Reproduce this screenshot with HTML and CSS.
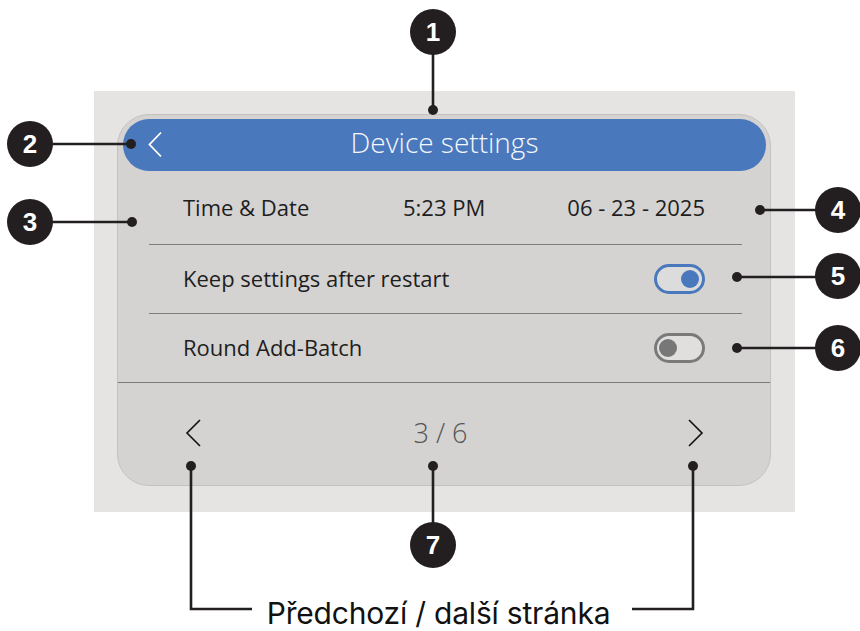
FILE: index.html
```html
<!DOCTYPE html>
<html lang="cs">
<head>
<meta charset="utf-8">
<title>Device settings</title>
<link rel="stylesheet" href="styles.css">
</head>
<body>
<div class="page">
  <div class="panel">
    <div class="card">
      <div class="header">
        <svg class="back" width="16" height="28" viewBox="0 0 16 28"><path d="M14 1.5 L2.5 13.5 L14 25.5" fill="none" stroke="#ffffff" stroke-width="1.8"/></svg>
        <h1 class="title">Device settings</h1>
        <span></span>
      </div>
      <div class="row row-time">
        <span class="label">Time &amp; Date</span>
        <span class="time">5:23 PM</span>
        <span class="date">06 - 23 - 2025</span>
      </div>
      <div class="divider"></div>
      <div class="row">
        <span class="label">Keep settings after restart</span>
        <span class="toggle on"><span class="knob"></span></span>
      </div>
      <div class="divider"></div>
      <div class="row">
        <span class="label">Round Add-Batch</span>
        <span class="toggle off"><span class="knob"></span></span>
      </div>
      <div class="divider full"></div>
      <div class="footer">
        <svg class="chev" width="16" height="28" viewBox="0 0 16 28"><path d="M15 1 L2 14 L15 27" fill="none" stroke="#111" stroke-width="1.6"/></svg>
        <span class="pager">3 / 6</span>
        <svg class="chev" width="16" height="28" viewBox="0 0 16 28"><path d="M1 1 L14 14 L1 27" fill="none" stroke="#111" stroke-width="1.6"/></svg>
      </div>
    </div>
  </div>
  <p class="caption">Předchozí / další stránka</p>

  <svg class="leaders" width="860" height="631" viewBox="0 0 860 631">
    <g stroke="#231f20" stroke-width="2.6" fill="none">
      <line x1="433" y1="50" x2="433" y2="110"/>
      <line x1="50" y1="144" x2="131" y2="144"/>
      <line x1="50" y1="222" x2="132" y2="222"/>
      <line x1="760" y1="210" x2="820" y2="210"/>
      <line x1="737" y1="277" x2="820" y2="277"/>
      <line x1="737" y1="348" x2="820" y2="348"/>
      <line x1="433" y1="466" x2="433" y2="527"/>
      <polyline points="191,466 191,609 252,609"/>
      <polyline points="693,466 693,609 632,609"/>
    </g>
    <g fill="#231f20">
      <circle cx="433" cy="110" r="5"/>
      <circle cx="131" cy="144" r="5"/>
      <circle cx="132" cy="222" r="5"/>
      <circle cx="760" cy="210" r="5"/>
      <circle cx="737" cy="277" r="5"/>
      <circle cx="737" cy="348" r="5"/>
      <circle cx="433" cy="466" r="5"/>
      <circle cx="191" cy="466" r="5"/>
      <circle cx="693" cy="466" r="5"/>
    </g>
  </svg>
  <div class="badge b1">1</div>
  <div class="badge b2">2</div>
  <div class="badge b3">3</div>
  <div class="badge b4">4</div>
  <div class="badge b5">5</div>
  <div class="badge b6">6</div>
  <div class="badge b7">7</div>
</div>
</body>
</html>
```

FILE: styles.css
```css
html, body {
  margin: 0;
  padding: 0;
  background: #ffffff;
}

.page {
  position: relative;
  width: 860px;
  height: 631px;
  overflow: hidden;
  padding-top: 91px;
  box-sizing: border-box;
  font-family: "Open Sans", "Noto Sans", sans-serif;
}

.panel {
  margin-left: 94px;
  width: 701px;
  height: 421px;
  background: #e5e4e3;
  padding: 23px 0 0 23px;
  box-sizing: border-box;
}

.card {
  width: 654px;
  height: 372px;
  box-sizing: border-box;
  border: 1px solid #c3c2c1;
  border-radius: 32px;
  background: #d4d3d2;
  padding-top: 4px;
  display: flex;
  flex-direction: column;
  overflow: hidden;
}

.header {
  margin: 0 4px 0 5px;
  height: 52px;
  border-radius: 26px;
  background: #4a78bd;
  display: grid;
  grid-template-columns: 1fr auto 1fr;
  align-items: center;
}

.back {
  margin-left: 24px;
  display: block;
}

.title {
  margin: 0;
  font-weight: 300;
  font-size: 28px;
  color: #f5f7fb;
  line-height: 46px;
  padding-bottom: 6px;
}

.row {
  display: flex;
  align-items: center;
  justify-content: space-between;
  padding: 0 65px;
  height: 68px;
  font-size: 22px;
  color: #1e1e1e;
}

.row .label {
  padding-bottom: 3px;
}

.row-time {
  height: 73px;
  display: grid;
  grid-template-columns: 220px 1fr auto;
  padding-top: 0;
  box-sizing: border-box;
}

.row-time .label, .time, .date {
  padding-bottom: 1px;
}

.label, .time, .date {
  white-space: nowrap;
}

.divider {
  height: 1px;
  background: #7e7e7e;
  margin: 0 28px 0 31px;
}

.divider.full {
  margin: 0;
  background: #7a7a7a;
}

.toggle {
  width: 51px;
  height: 30px;
  box-sizing: border-box;
  border-radius: 15px;
  border: 3px solid #7a7a7a;
  background: #e0dfde;
  display: flex;
  align-items: center;
  padding: 0 3px;
}

.toggle.on {
  border-color: #4a78bd;
  justify-content: flex-end;
  background: #dcdcdc;
}

.toggle.off {
  justify-content: flex-start;
  padding-left: 2px;
}

.knob {
  width: 18px;
  height: 18px;
  border-radius: 50%;
  background: #777777;
}

.toggle.on .knob {
  background: #4a78bd;
}

.footer {
  flex: 1;
  display: flex;
  align-items: center;
  justify-content: space-between;
  padding: 0 66px 3px 67px;
}

.chev {
  display: block;
}

.pager {
  font-weight: 300;
  font-size: 27px;
  color: #555555;
  padding-right: 8px;
}

.caption {
  margin: 86px 0 0 0;
  padding-left: 17px;
  text-align: center;
  font-family: "Inter", "Liberation Sans", sans-serif;
  font-size: 30px;
  line-height: 30px;
  color: #111111;
  letter-spacing: -0.2px;
}

.leaders {
  position: absolute;
  left: 0;
  top: 0;
  pointer-events: none;
}

.badge {
  position: absolute;
  width: 46px;
  height: 46px;
  margin: -23px 0 0 -23px;
  border-radius: 50%;
  background: #231f20;
  color: #ffffff;
  font-family: "Liberation Sans", Arial, sans-serif;
  font-weight: 700;
  font-size: 26px;
  line-height: 46px;
  text-align: center;
}

.b1 { left: 433px; top: 32px; }
.b2 { left: 30px; top: 144px; }
.b3 { left: 30px; top: 222px; }
.b4 { left: 838px; top: 210px; }
.b5 { left: 838px; top: 276px; }
.b6 { left: 838px; top: 348px; }
.b7 { left: 433px; top: 545px; }
```
